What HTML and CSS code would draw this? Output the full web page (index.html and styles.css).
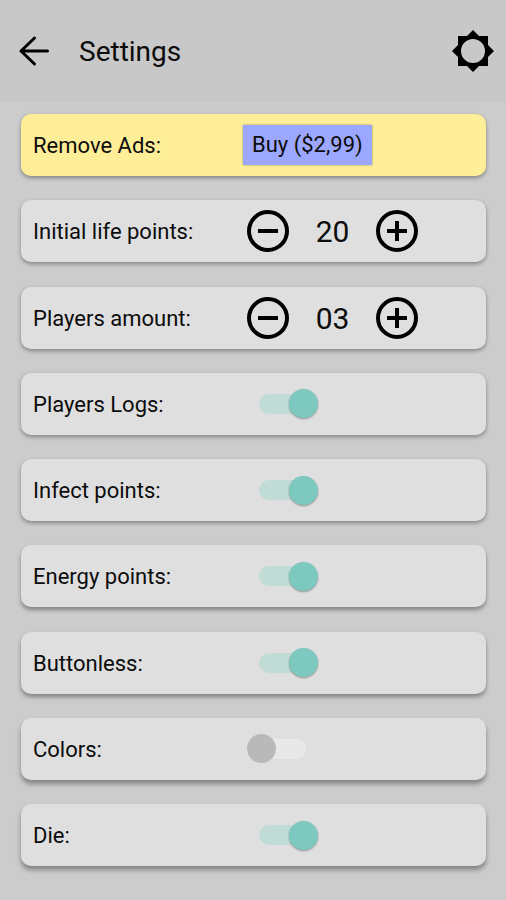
FILE: index.html
```html
<!DOCTYPE html>
<html lang="en">
<head>
<meta charset="utf-8">
<meta name="viewport" content="width=device-width, initial-scale=1">
<title>Settings</title>
<link rel="stylesheet" href="styles.css">
</head>
<body>
<header class="bar">
  <button class="icon-button" type="button" aria-label="Back">
    <svg class="icon-back" viewBox="0 0 32 32" aria-hidden="true"><path d="M29.500 16H3M16.500 3L3 16L16.500 29"/></svg>
  </button>
  <h1 class="title">Settings</h1>
  <button class="icon-button" type="button" aria-label="Brightness">
    <svg class="icon-sun" viewBox="0 0 42 42" aria-hidden="true"><path fill-rule="evenodd" d="M21 0L27 6H36V15L42 21L36 27V36H27L21 42L15 36H6V27L0 21L6 15V6H15ZM21 9A12 12 0 1 0 21 33A12 12 0 1 0 21 9Z"/></svg>
  </button>
</header>
<main class="list">
  <div class="card card-promo">
    <span class="label">Remove Ads:</span>
    <button class="buy" type="button">Buy ($2,99)</button>
  </div>
  <div class="card">
    <label class="label" for="life">Initial life points:</label>
    <div class="stepper">
      <button class="step" type="button" aria-label="Decrease life points"><svg viewBox="0 0 42 42" aria-hidden="true"><circle cx="21" cy="21" r="19"/><path d="M11 21H31"/></svg></button>
      <output class="value" id="life">20</output>
      <button class="step" type="button" aria-label="Increase life points"><svg viewBox="0 0 42 42" aria-hidden="true"><circle cx="21" cy="21" r="19"/><path d="M11 21H31M21 11V31"/></svg></button>
    </div>
  </div>
  <div class="card">
    <label class="label" for="players">Players amount:</label>
    <div class="stepper">
      <button class="step" type="button" aria-label="Decrease players"><svg viewBox="0 0 42 42" aria-hidden="true"><circle cx="21" cy="21" r="19"/><path d="M11 21H31"/></svg></button>
      <output class="value" id="players">03</output>
      <button class="step" type="button" aria-label="Increase players"><svg viewBox="0 0 42 42" aria-hidden="true"><circle cx="21" cy="21" r="19"/><path d="M11 21H31M21 11V31"/></svg></button>
    </div>
  </div>
  <div class="card">
    <label class="label" for="logs">Players Logs:</label>
    <input class="switch" type="checkbox" id="logs" checked>
  </div>
  <div class="card">
    <label class="label" for="infect">Infect points:</label>
    <input class="switch" type="checkbox" id="infect" checked>
  </div>
  <div class="card card-low">
    <label class="label" for="energy">Energy points:</label>
    <input class="switch" type="checkbox" id="energy" checked>
  </div>
  <div class="card card-low">
    <label class="label" for="buttonless">Buttonless:</label>
    <input class="switch" type="checkbox" id="buttonless" checked>
  </div>
  <div class="card card-lowest">
    <label class="label" for="colors">Colors:</label>
    <input class="switch" type="checkbox" id="colors">
  </div>
  <div class="card card-lowest">
    <label class="label" for="die">Die:</label>
    <input class="switch" type="checkbox" id="die" checked>
  </div>
</main>
</body>
</html>
```
FILE: styles.css
```css
* {
  box-sizing: border-box;
}

body {
  margin: 0;
  min-height: 100vh;
  display: flex;
  flex-direction: column;
  background: #ccc;
  color: #0c0c0c;
  font-family: Roboto, "Liberation Sans", sans-serif;
  font-size: 22px;
  line-height: 28px;
}

button {
  padding: 0;
  border: 0;
  background: none;
  color: inherit;
  font: inherit;
  cursor: pointer;
}

svg {
  display: block;
}

.bar {
  display: flex;
  align-items: center;
  height: 102px;
  padding: 0 12px 0 18px;
  background: #c8c8c8;
}

.title {
  flex: 1;
  margin: 0 0 0 29px;
  padding-top: 2px;
  font-size: 28px;
  font-weight: 400;
  line-height: 36px;
}

.icon-back {
  width: 32px;
  height: 32px;
  fill: none;
  stroke: #000;
  stroke-width: 3;
  stroke-linecap: round;
  stroke-linejoin: round;
}

.icon-sun {
  width: 42px;
  height: 42px;
  fill: #000;
}

/* Rows share out the height left under the bar. */
.list {
  flex: 1;
  display: flex;
  flex-direction: column;
  justify-content: space-between;
  gap: 16px;
  padding: 12px 20px 34px 21px;
}

.card {
  display: grid;
  grid-template-columns: 210px 1fr;
  align-items: center;
  justify-items: start;
  height: 62px;
  padding: 0 12px;
  border-radius: 10px;
  background: #dfdfdf;
  box-shadow: 0 2px 4px rgba(0, 0, 0, 0.36);
}

.card-promo {
  background: #ffee98;
}

.card-low {
  box-shadow: 0 3px 4px rgba(0, 0, 0, 0.36);
}

.card-lowest {
  box-shadow: 0 4px 5px rgba(0, 0, 0, 0.36);
}

.label {
  padding-top: 2px;
}

.buy {
  height: 40px;
  padding: 0 9px;
  background: #9ca8ff;
  box-shadow: 0 0 2px rgba(0, 0, 0, 0.4);
}

.stepper {
  display: flex;
  align-items: center;
  margin-left: 4px;
}

.step svg {
  width: 42px;
  height: 42px;
  fill: none;
  stroke: #000;
  stroke-width: 4;
}

.value {
  width: 87px;
  padding-top: 2px;
  font-size: 30px;
  line-height: 36px;
  text-align: center;
}

.switch {
  appearance: none;
  position: relative;
  display: flex;
  align-items: center;
  width: 71px;
  height: 30px;
  margin: 0 0 0 4px;
  cursor: pointer;
}

.switch::before {
  content: "";
  position: absolute;
  inset: 5px 12px;
  border-radius: 10px;
  background: #e8e8e8;
}

.switch::after {
  content: "";
  position: relative;
  width: 29px;
  height: 29px;
  border-radius: 50%;
  background: #b9b9b9;
}

.switch:checked {
  justify-content: flex-end;
}

.switch:checked::before {
  background: #c1dcd6;
}

.switch:checked::after {
  background: #7dc8bf;
  box-shadow: 0 1px 2px rgba(0, 0, 0, 0.35);
}
```
